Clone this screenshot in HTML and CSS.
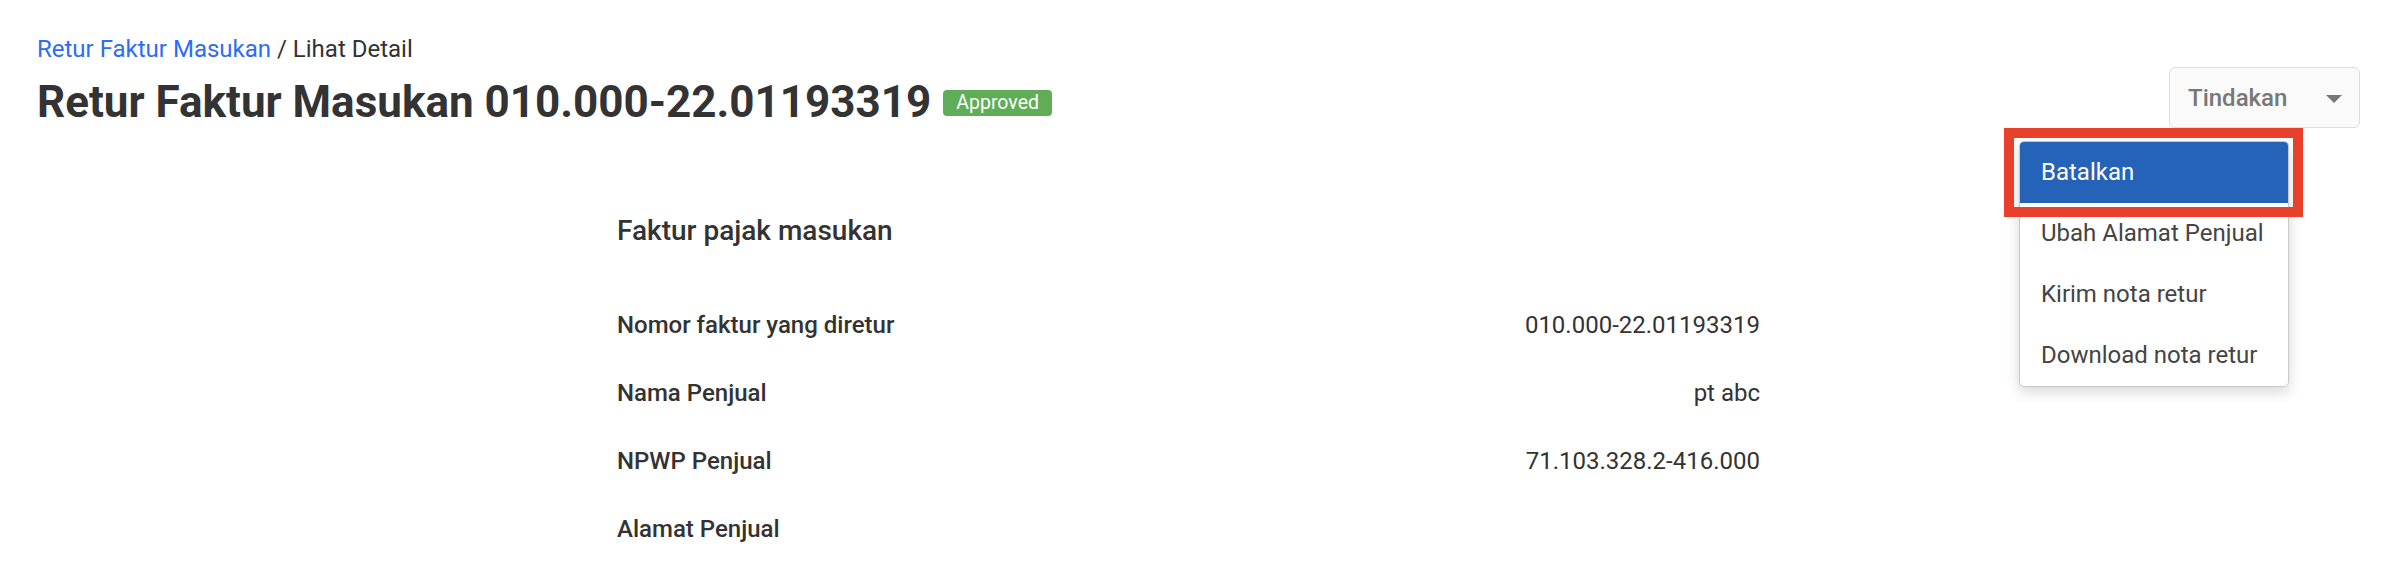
FILE: index.html
```html
<!DOCTYPE html>
<html lang="id">
<head>
<meta charset="utf-8">
<title>Retur Faktur Masukan</title>
<link rel="stylesheet" href="styles.css">
</head>
<body>
<div class="page">
  <header class="head">
    <div class="head-left">
      <nav class="crumbs"><a class="crumb-link" href="#">Retur Faktur Masukan</a> / Lihat Detail</nav>
      <div class="title-row">
        <h1 class="title">Retur Faktur Masukan 010.000-22.01193319</h1>
        <span class="badge">Approved</span>
      </div>
    </div>
    <div class="actions">
      <button class="action-btn" type="button">
        <span>Tindakan</span>
        <svg class="caret" width="16" height="8" viewBox="0 0 16 8"><path d="M0 0 L16 0 L8 8 Z" fill="#777"/></svg>
      </button>
      <ul class="menu">
        <li class="menu-item active">Batalkan</li>
        <li class="menu-item">Ubah Alamat Penjual</li>
        <li class="menu-item">Kirim nota retur</li>
        <li class="menu-item">Download nota retur</li>
      </ul>
      <div class="highlight"></div>
    </div>
  </header>
  <section class="detail">
    <h2 class="section-title">Faktur pajak masukan</h2>
    <div class="row"><span class="label">Nomor faktur yang diretur</span><span class="value">010.000-22.01193319</span></div>
    <div class="row"><span class="label">Nama Penjual</span><span class="value">pt abc</span></div>
    <div class="row"><span class="label">NPWP Penjual</span><span class="value">71.103.328.2-416.000</span></div>
    <div class="row"><span class="label">Alamat Penjual</span><span class="value"></span></div>
  </section>
</div>
</body>
</html>
```
FILE: styles.css
```css
* { box-sizing: border-box; }
html, body { margin: 0; padding: 0; background: #fff; }
body {
  font-family: Roboto, "Noto Sans", "Liberation Sans", sans-serif;
  color: #333;
  overflow: hidden;
}
.page { padding: 35px 34px 0 37px; }
.head { display: flex; justify-content: space-between; align-items: flex-start; }
.crumbs { font-size: 24px; line-height: 28px; color: #333; }
.crumb-link { color: #2d6cf6; text-decoration: none; }
.title-row { display: flex; align-items: center; gap: 12px; margin-top: 12px; }
.title { margin: 0; font-size: 44px; line-height: 54px; font-weight: 700; color: #333; }
.badge {
  background: #5fad56; color: #fff; font-size: 19.5px; line-height: 26px;
  padding: 0 13px; border-radius: 4px; margin-top: 2px;
}
.actions { position: relative; margin-top: 32px; }
.action-btn {
  display: flex; align-items: center; justify-content: space-between;
  width: 191px; height: 61px; padding: 0 17px 0 18px;
  background: #fafafa; border: 1px solid #dedede; border-radius: 6px;
  font-family: inherit; font-size: 24px; font-weight: 500; color: #777;
}
.caret { display: block; margin-top: 2px; }
.menu {
  position: absolute; top: 74px; right: 71px; width: 270px;
  margin: 0; padding: 0; list-style: none; background: #fff;
  border: 1px solid #c9c9c9; border-radius: 5px;
  box-shadow: 0 5px 14px rgba(0,0,0,0.16);
  overflow: hidden;
}
.menu-item { height: 61px; line-height: 61px; padding-left: 21px; font-size: 24px; color: #444; }
.menu-item.active { background: #2563b8; color: #fff; }
.highlight {
  position: absolute; top: 61px; right: 57px; width: 299px; height: 89px;
  border: 10px solid #e8402a;
}
.detail { margin: 84px 0 0 580px; width: 1143px; }
.section-title { margin: 0 0 62px; font-size: 28px; line-height: 36px; font-weight: 500; color: #333; }
.row { display: flex; justify-content: space-between; height: 68px; line-height: 28px; font-size: 24px; }
.label { font-weight: 500; color: #333; }
.value { color: #333; }
```
